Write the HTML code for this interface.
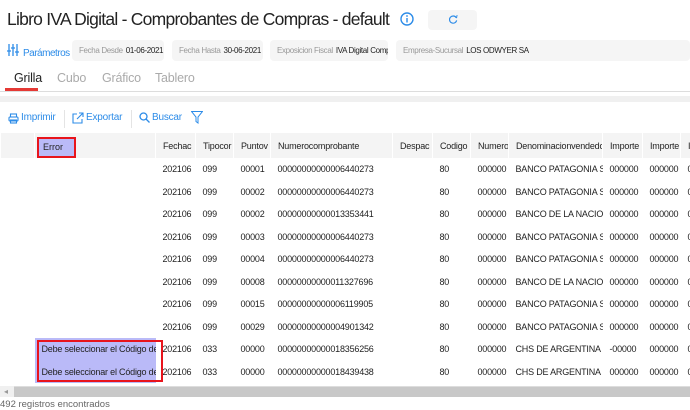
<!DOCTYPE html>
<html><head><meta charset="utf-8"><style>
*{margin:0;padding:0;box-sizing:border-box}
body{width:690px;height:405px;overflow:hidden;background:#fff;font-family:"Liberation Sans",sans-serif;position:relative;color:#222}
.a{position:absolute;white-space:nowrap}
h1{position:absolute;left:7px;top:9px;font-weight:normal;font-size:17.5px;color:#222;letter-spacing:-0.75px;white-space:nowrap}
.chip{position:absolute;top:40px;height:21px;background:#f5f5f5;border-radius:4px;font-size:8px;line-height:21px;padding-left:7px;white-space:nowrap;overflow:hidden;letter-spacing:-0.35px}
.chip span{color:#999;margin-right:3px}
.tab{position:absolute;top:71px;font-size:12.5px;color:#aaa;letter-spacing:-0.2px}
table{position:absolute;left:0;top:133px;width:710px;border-collapse:collapse;table-layout:fixed;font-size:9px;letter-spacing:-0.2px}
td,th{overflow:hidden;white-space:nowrap;padding-left:7px;text-align:left;font-weight:normal}
th{height:25px;background:#f4f4f4;border-left:1px solid #fff;color:#222}
td{height:22.5px;color:#222}
.blue{color:#2d8ce8}
</style></head><body>
<h1>Libro IVA Digital - Comprobantes de Compras - default</h1>
<svg class="a" style="left:400px;top:12px" width="14" height="14" viewBox="0 0 14 14"><circle cx="7" cy="7" r="6" fill="none" stroke="#2d8ce8" stroke-width="1.4"/><rect x="6.3" y="6" width="1.4" height="4.5" fill="#2d8ce8"/><circle cx="7" cy="4" r=".9" fill="#2d8ce8"/></svg>
<div class="a" style="left:428px;top:10px;width:49px;height:20px;background:#f5f5f5;border-radius:4px"></div>
<svg class="a" style="left:449px;top:15px" width="9" height="9" viewBox="0 0 10 10"><path d="M8 3A4 4 0 1 0 8.5 6" fill="none" stroke="#2d8ce8" stroke-width="1.3"/><path d="M6 1L8.5 3L9 0" fill="none" stroke="#2d8ce8" stroke-width="1"/></svg>
<svg class="a" style="left:7px;top:44px" width="12" height="12" viewBox="0 0 12 12" stroke="#2d8ce8" stroke-width="1.3"><path d="M2 0V12M6 0V12M10 0V12"/><path d="M0 7H4M4 4H8M8 8H12"/></svg>
<div class="a blue" style="left:23px;top:44px;font-size:10px;letter-spacing:-0.5px">Parámetros 〉</div>
<div class="chip" style="left:72px;width:92px"><span>Fecha Desde</span>01-06-2021</div>
<div class="chip" style="left:172px;width:91px"><span>Fecha Hasta</span>30-06-2021</div>
<div class="chip" style="left:270px;width:118px"><span>Exposicion Fiscal</span>IVA Digital Compras</div>
<div class="chip" style="left:396px;width:294px"><span>Empresa-Sucursal</span>LOS ODWYER SA</div>
<div class="tab" style="left:14px;color:#222">Grilla</div>
<div class="tab" style="left:57px">Cubo</div>
<div class="tab" style="left:102px">Gráfico</div>
<div class="tab" style="left:155px">Tablero</div>
<div class="a" style="left:5px;top:88px;width:33px;height:3px;background:#e53935"></div>
<div class="a" style="left:0;top:91px;width:690px;height:1px;background:#ddd"></div>
<div class="a" style="left:0;top:96px;width:690px;height:6px;background:#f0f0f0"></div>
<svg class="a" style="left:8px;top:113px" width="11" height="11" viewBox="0 0 11 11" fill="none" stroke="#2d8ce8" stroke-width="1.1"><rect x="2.5" y="1" width="6" height="3"/><rect x="1" y="4" width="9" height="4" rx="1"/><rect x="2.5" y="7" width="6" height="3"/></svg>
<div class="a blue" style="left:21px;top:112px;font-size:10px;letter-spacing:-0.2px">Imprimir</div>
<div class="a" style="left:64px;top:110px;width:1px;height:18px;background:#e4e4e4"></div>
<svg class="a" style="left:72px;top:112px" width="12" height="12" viewBox="0 0 12 12" fill="none" stroke="#2d8ce8" stroke-width="1.1"><path d="M5 2H1V11H10V7"/><path d="M7 1H11V5M11 1L5 7"/></svg>
<div class="a blue" style="left:86px;top:112px;font-size:10px;letter-spacing:-0.2px">Exportar</div>
<div class="a" style="left:131px;top:110px;width:1px;height:18px;background:#e4e4e4"></div>
<svg class="a" style="left:139px;top:112px" width="11" height="11" viewBox="0 0 11 11" fill="none" stroke="#2d8ce8" stroke-width="1.3"><circle cx="4.5" cy="4.5" r="3.5"/><path d="M7 7L10.5 10.5"/></svg>
<div class="a blue" style="left:152px;top:112px;font-size:10px;letter-spacing:-0.2px">Buscar</div>
<svg class="a" style="left:191px;top:111px" width="12" height="13" viewBox="0 0 12 13" fill="none" stroke="#2d8ce8" stroke-width="1"><path d="M0.5 0.5H11.5L7 6V12L5 10.5V6Z"/></svg>
<table>
<colgroup><col style="width:34px"><col style="width:121px"><col style="width:40px"><col style="width:38px"><col style="width:37px"><col style="width:122px"><col style="width:40px"><col style="width:38px"><col style="width:38px"><col style="width:94px"><col style="width:40px"><col style="width:38px"><col style="width:30px"></colgroup>
<tr><th></th><th></th><th>Fechac</th><th>Tipocor</th><th>Puntov</th><th>Numerocomprobante</th><th>Despac</th><th>Codigo</th><th>Numero</th><th>Denominacionvendedor</th><th>Importe</th><th>Importe</th><th>Im</th></tr>
<tr><td></td><td></td><td>202106</td><td>099</td><td>00001</td><td>00000000000006440273</td><td></td><td>80</td><td>000000</td><td>BANCO PATAGONIA SA</td><td>000000</td><td>000000</td><td>0</td></tr>
<tr><td></td><td></td><td>202106</td><td>099</td><td>00002</td><td>00000000000006440273</td><td></td><td>80</td><td>000000</td><td>BANCO PATAGONIA SA</td><td>000000</td><td>000000</td><td>0</td></tr>
<tr><td></td><td></td><td>202106</td><td>099</td><td>00002</td><td>00000000000013353441</td><td></td><td>80</td><td>000000</td><td>BANCO DE LA NACION</td><td>000000</td><td>000000</td><td>0</td></tr>
<tr><td></td><td></td><td>202106</td><td>099</td><td>00003</td><td>00000000000006440273</td><td></td><td>80</td><td>000000</td><td>BANCO PATAGONIA SA</td><td>000000</td><td>000000</td><td>0</td></tr>
<tr><td></td><td></td><td>202106</td><td>099</td><td>00004</td><td>00000000000006440273</td><td></td><td>80</td><td>000000</td><td>BANCO PATAGONIA SA</td><td>000000</td><td>000000</td><td>0</td></tr>
<tr><td></td><td></td><td>202106</td><td>099</td><td>00008</td><td>00000000000011327696</td><td></td><td>80</td><td>000000</td><td>BANCO DE LA NACION</td><td>000000</td><td>000000</td><td>0</td></tr>
<tr><td></td><td></td><td>202106</td><td>099</td><td>00015</td><td>00000000000006119905</td><td></td><td>80</td><td>000000</td><td>BANCO PATAGONIA SA</td><td>000000</td><td>000000</td><td>0</td></tr>
<tr><td></td><td></td><td>202106</td><td>099</td><td>00029</td><td>00000000000004901342</td><td></td><td>80</td><td>000000</td><td>BANCO PATAGONIA SA</td><td>000000</td><td>000000</td><td>0</td></tr>
<tr><td></td><td style="background:#babaf8">Debe seleccionar el Código de</td><td>202106</td><td>033</td><td>00000</td><td>00000000000018356256</td><td></td><td>80</td><td>000000</td><td>CHS DE ARGENTINA SA</td><td>-00000</td><td>000000</td><td>0</td></tr>
<tr><td></td><td style="background:#babaf8">Debe seleccionar el Código de</td><td>202106</td><td>033</td><td>00000</td><td>00000000000018439438</td><td></td><td>80</td><td>000000</td><td>CHS DE ARGENTINA SA</td><td>000000</td><td>000000</td><td>0</td></tr>
</table>
<div class="a" style="left:37px;top:137px;width:39px;height:21px;border:2px solid #e8141c;background:#babaf8;font-size:9px;line-height:17px;padding-left:4px">Error</div>
<div class="a" style="left:37px;top:340px;width:126px;height:42px;border:2px solid #e8141c"></div>
<div class="a" style="left:0;top:386px;width:690px;height:11px;background:#c8c8c8;border-top:1px solid #ddd"></div>
<div class="a" style="left:0;top:386px;width:14px;height:11px;background:#f0f0f0;color:#999;font-size:8px;line-height:11px;padding-left:4px">◂</div>
<div class="a" style="left:0;top:399px;font-size:9.5px;color:#666">492 registros encontrados</div>
</body></html>
